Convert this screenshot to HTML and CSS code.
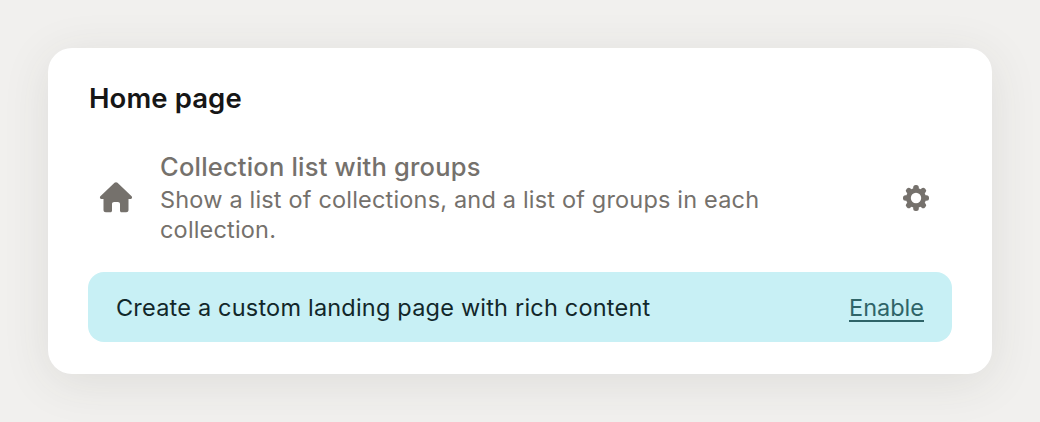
FILE: index.html
```html
<!DOCTYPE html>
<html lang="en">
<head>
    <meta charset="UTF-8">
    <title>Home page</title>
    <link rel="stylesheet" href="styles.css">
</head>
<body>
    <div class="card">
        <h2>Home page</h2>
        <div class="option">
            <svg class="home-icon" viewBox="0 0 34 32" width="34" height="32">
                <path d="M17 1.2c.6 0 1.1.2 1.5.6L32.6 15.2c1 1 .4 2.8-1.1 2.8H29.500v11c0 1.300-1 2.300-2.300 2.300h-4.700c-.8 0-1.500-.7-1.500-1.500V23c0-1.200-.9-2.100-2.100-2.100h-3.800c-1.200 0-2.100.9-2.100 2.100v6.800c0 .8-.7 1.500-1.500 1.500H6.800c-1.300 0-2.300-1-2.300-2.300V18H2.500c-1.500 0-2.100-1.800-1.100-2.800L15.500 1.800c.4-.4.900-.6 1.500-.6z"/>
            </svg>
            <div class="option-text">
                <div class="option-title">Collection list with groups</div>
                <div class="option-desc">Show a list of collections, and a list of groups in each collection.</div>
            </div>
            <svg class="gear-icon" viewBox="0 0 26 26" width="26" height="26">
                <g>
                    <circle cx="13" cy="13" r="10"/>
                    <rect x="10.200" y="0" width="5.600" height="26" rx="2.500"/>
                    <rect x="10.200" y="0" width="5.600" height="26" rx="2.500" transform="rotate(45 13 13)"/>
                    <rect x="10.200" y="0" width="5.600" height="26" rx="2.500" transform="rotate(90 13 13)"/>
                    <rect x="10.200" y="0" width="5.600" height="26" rx="2.500" transform="rotate(135 13 13)"/>
                </g>
                <circle class="gear-hole" cx="13" cy="13" r="5.200"/>
            </svg>
        </div>
        <div class="banner">
            <span>Create a custom landing page with rich content</span>
            <a href="#">Enable</a>
        </div>
    </div>
</body>
</html>
```

FILE: styles.css
```css
html, body {
    height: 100%;
}
body {
    margin: 0;
    padding: 48px;
    box-sizing: border-box;
    height: 422px;
    overflow: hidden;
    background-color: #f1f0ee;
    font-family: Inter, "Liberation Sans", sans-serif;
}
.card {
    box-sizing: border-box;
    width: 944px;
    height: 326px;
    padding: 32px 40px 32px 41px;
    background: #fff;
    border-radius: 24px;
    box-shadow: 0 8px 48px rgba(60, 55, 50, 0.1);
}
h2 {
    margin: 0;
    font-size: 27.500px;
    line-height: 36px;
    font-weight: 600;
    letter-spacing: 0.1px;
    color: #161616;
}
.option {
    display: flex;
    align-items: center;
    margin-top: 35px;
    color: #75716c;
}
.home-icon {
    flex: none;
    margin-left: 10px;
    margin-right: 27px;
    margin-bottom: 2px;
    fill: #75716c;
}
.option-text {
    width: 640px;
}
.option-title {
    font-size: 25.500px;
    line-height: 32px;
    margin-bottom: 2px;
    font-weight: 500;
    letter-spacing: 0.2px;
}
.option-desc {
    font-size: 23.500px;
    line-height: 30px;
    letter-spacing: 0.18px;
}
.gear-icon {
    flex: none;
    margin-left: 103px;
    fill: #75716c;
}
.gear-hole {
    fill: #fff;
}
.banner {
    display: flex;
    justify-content: space-between;
    align-items: center;
    height: 70px;
    margin-top: 27px;
    margin-left: -1px;
    padding: 0 28px;
    background: #c8f0f5;
    border-radius: 16px;
    font-size: 23.500px;
    color: #12272a;
}
.banner span {
    letter-spacing: 0.2px;
}
.banner a {
    color: #2f6468;
    text-decoration: underline;
    text-underline-offset: 4px;
}
```
